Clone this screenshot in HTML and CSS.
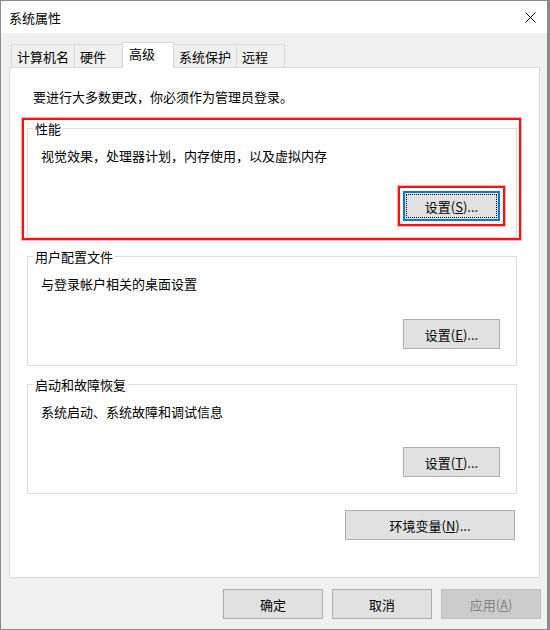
FILE: index.html
```html
<!DOCTYPE html>
<html lang="zh-CN">
<head>
<meta charset="utf-8">
<title>系统属性</title>
<link rel="stylesheet" href="styles.css">
</head>
<body>
<div class="window">
  <div class="titlebar">
    <span class="title">系统属性</span>
    <svg class="close" width="11" height="11" viewBox="0 0 11 11" aria-label="关闭">
      <path d="M0.5 0.5 L10.5 10.5 M10.5 0.5 L0.5 10.5" stroke="#000" stroke-width="1" fill="none"/>
    </svg>
  </div>
  <div class="content">
    <div class="tabs">
      <div class="tab">计算机名</div>
      <div class="tab">硬件</div>
      <div class="tab active">高级</div>
      <div class="tab">系统保护</div>
      <div class="tab">远程</div>
    </div>
    <div class="panel">
      <p class="note">要进行大多数更改，你必须作为管理员登录。</p>

      <div class="annotated">
        <fieldset class="group">
          <legend>性能</legend>
          <p class="desc">视觉效果，处理器计划，内存使用，以及虚拟内存</p>
          <div class="actions">
            <span class="annotated-btn">
              <button class="btn btn-set focused">设置(<u>S</u>)...</button>
              <span class="mark mark-btn"></span>
            </span>
          </div>
        </fieldset>
        <span class="mark mark-group"></span>
      </div>

      <fieldset class="group">
        <legend>用户配置文件</legend>
        <p class="desc">与登录帐户相关的桌面设置</p>
        <div class="actions">
          <button class="btn btn-set">设置(<u>E</u>)...</button>
        </div>
      </fieldset>

      <fieldset class="group">
        <legend>启动和故障恢复</legend>
        <p class="desc">系统启动、系统故障和调试信息</p>
        <div class="actions">
          <button class="btn btn-set">设置(<u>T</u>)...</button>
        </div>
      </fieldset>

      <div class="env-row">
        <button class="btn btn-env">环境变量(<u>N</u>)...</button>
      </div>
    </div>
    <div class="footer">
      <button class="btn btn-foot">确定</button>
      <button class="btn btn-foot">取消</button>
      <button class="btn btn-foot disabled" disabled>应用(<u>A</u>)</button>
    </div>
  </div>
</div>
</body>
</html>
```

FILE: styles.css
```css
* {
  box-sizing: border-box;
}

html,
body {
  margin: 0;
  padding: 0;
}

body {
  width: 550px;
  height: 630px;
  background: #8a8a8a;
  font-family: "Noto Sans CJK SC", "Microsoft YaHei", sans-serif;
  font-size: 13px;
  line-height: 17px;
  color: #000;
}

.window {
  width: 548px;
  height: 630px;
  border: 1px solid #8a8a8a;
  background: #f0f0f0;
  display: flex;
  flex-direction: column;
}

.titlebar {
  height: 32px;
  flex: none;
  background: #fff;
  display: flex;
  align-items: center;
  justify-content: space-between;
  padding: 0 11px 0 8px;
}

.close {
  display: block;
}

.content {
  flex: 1;
  display: flex;
  flex-direction: column;
  padding: 9px 7px 0 8px;
}

.tabs {
  display: flex;
  align-items: flex-end;
  padding-left: 2px;
  height: 25px;
  flex: none;
}

.tab {
  height: 23px;
  min-width: 49px;
  padding: 2px 5px 0;
  line-height: 20px;
  border: 1px solid #d9d9d9;
  border-bottom: 0;
  margin-right: -1px;
  background: #f0f0f0;
  white-space: nowrap;
}

.tab.active {
  position: relative;
  z-index: 1;
  height: 26px;
  min-width: 52px;
  padding: 1px 6px 0;
  margin-bottom: -1px;
  background: #fff;
}

.panel {
  flex: none;
  height: 511px;
  border: 1px solid #d9d9d9;
  background: #fff;
  padding: 20px 22px 0 17px;
}

.note {
  margin: 0 0 15px 6px;
}

.annotated {
  position: relative;
}

.group {
  margin: 0;
  padding: 0;
  min-width: 0;
  border: 1px solid #dcdcdc;
}

.group + .group,
.annotated + .group {
  margin-top: 10px;
}

.group legend {
  margin-left: 5px;
  padding: 0 2px;
  line-height: 17px;
}

.desc {
  margin: 10px 0 0 13px;
}

.actions {
  display: flex;
  justify-content: flex-end;
  padding: 27px 16px 16px 0;
}

.btn {
  font: inherit;
  color: #000;
  background: #e1e1e1;
  border: 1px solid #adadad;
  border-radius: 0;
  padding: 0;
  height: 30px;
  line-height: 17px;
  white-space: nowrap;
}

.btn-set {
  width: 97px;
}

.btn.focused {
  border: 2px solid #0078d7;
  outline: 1px dotted #000;
  outline-offset: -4px;
}

.annotated-btn {
  position: relative;
  display: inline-block;
}

.annotated-btn .btn {
  display: block;
}

.mark {
  position: absolute;
  border: 2px solid #ff1010;
  box-shadow: 0 0 0 1px rgba(255, 80, 80, 0.45);
  pointer-events: none;
}

.mark-group {
  left: -5px;
  right: -4px;
  top: -2px;
  bottom: -2px;
}

.mark-btn {
  left: -5px;
  right: -5px;
  top: -5px;
  bottom: -5px;
}

.env-row {
  display: flex;
  justify-content: flex-end;
  margin-top: 16px;
  padding-right: 2px;
}

.btn-env {
  width: 170px;
}

.footer {
  display: flex;
  justify-content: flex-end;
  gap: 9px;
  margin-top: 11px;
  margin-right: -1px;
}

.btn-foot {
  width: 100px;
}

.btn.disabled {
  background: #cccccc;
  border-color: #bfbfbf;
  color: #838383;
}
```
